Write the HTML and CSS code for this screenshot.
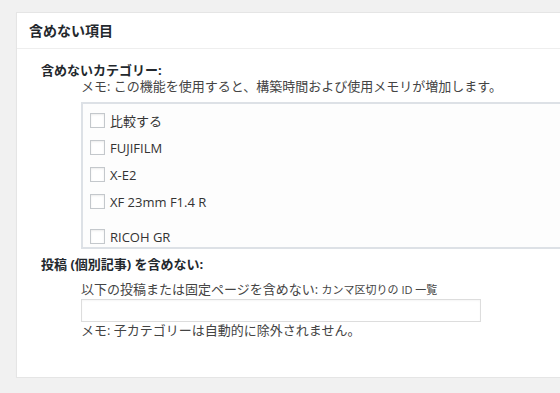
FILE: index.html
```html
<!DOCTYPE html>
<html lang="ja">
<head>
<meta charset="utf-8">
<title>含めない項目</title>
<link rel="stylesheet" href="styles.css">
</head>
<body>
<div class="page">
  <section class="card">
    <h2 class="card-title">含めない項目</h2>
    <div class="card-body">
      <div class="field-label">含めないカテゴリー:</div>
      <div class="field">
        <p class="note">メモ: この機能を使用すると、構築時間および使用メモリが増加します。</p>
        <div class="checklist">
          <label class="item"><input type="checkbox" class="cb"><span>比較する</span></label>
          <label class="item"><input type="checkbox" class="cb"><span>FUJIFILM</span></label>
          <label class="item"><input type="checkbox" class="cb"><span>X-E2</span></label>
          <label class="item"><input type="checkbox" class="cb"><span>XF 23mm F1.4 R</span></label>
          <label class="item item-sep"><input type="checkbox" class="cb"><span>RICOH GR</span></label>
        </div>
      </div>
      <div class="field-label label-2">投稿 (個別記事) を含めない:</div>
      <div class="field">
        <p class="desc">以下の投稿または固定ページを含めない: <small class="hint">カンマ区切りの ID 一覧</small></p>
        <input type="text" class="text-input">
        <p class="note">メモ: 子カテゴリーは自動的に除外されません。</p>
      </div>
    </div>
  </section>
</div>
</body>
</html>
```
FILE: styles.css
```css
html, body {
  margin: 0;
  padding: 0;
  background: #f1f1f1;
}
body {
  font-family: "Open Sans", "Noto Sans CJK JP", sans-serif;
  color: #444;
  font-size: 13px;
}
.page {
  padding: 12px 0 0 16px;
}
.card {
  background: #fff;
  border: 1px solid #e5e5e5;
  border-right: none;
  box-shadow: 0 1px 1px rgba(0, 0, 0, 0.04);
}
.card-title {
  margin: 0;
  padding: 8px 12px;
  font-size: 14px;
  line-height: 19px;
  font-weight: 700;
  color: #23282d;
  border-bottom: 1px solid #eee;
}
.card-body {
  padding: 13px 0 39px 24px;
}
.field-label {
  font-weight: 700;
  color: #23282d;
  line-height: 16px;
}
.label-2 {
  margin-top: 7px;
}
.field {
  padding-left: 40px;
}
.note, .desc {
  margin: 0;
  line-height: 16px;
  color: #444;
}
.desc {
  margin-top: 9px;
}
.hint {
  font-size: 11px;
}
.checklist {
  margin-top: 8px;
  height: 140px;
  overflow: hidden;
  border: 2px solid #dde1e6;
  border-right: none;
  background: #fdfdfd;
  padding-top: 3px;
  box-sizing: content-box;
  display: flex;
  flex-direction: column;
}
.item {
  display: flex;
  align-items: center;
  flex: 0 0 27px;
  height: 27px;
  padding-left: 7px;
  color: #333;
}
.item-sep {
  margin-top: 8px;
}
.cb {
  appearance: none;
  -webkit-appearance: none;
  width: 15px;
  height: 15px;
  margin: 0 5px 0 0;
  border: 1px solid #c4c8cc;
  background: #fff;
  box-shadow: inset 0 1px 2px rgba(0, 0, 0, 0.08);
  box-sizing: border-box;
}
.text-input {
  display: block;
  width: 400px;
  height: 23px;
  margin: 1px 0 0 0;
  padding: 0 4px;
  box-sizing: border-box;
  border: 1px solid #ddd;
  box-shadow: inset 0 1px 2px rgba(0, 0, 0, 0.04);
  background: #fff;
}
```
